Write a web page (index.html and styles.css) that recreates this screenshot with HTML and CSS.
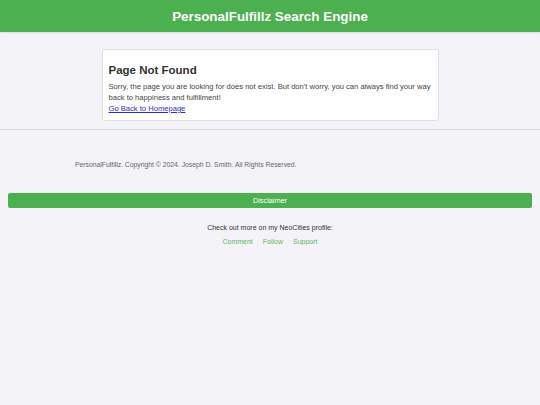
FILE: index.html
```
<!DOCTYPE html>
<html>
<head>
<meta charset="utf-8">
<link rel="stylesheet" href="styles.css">
</head>
<body>
<header class="top">PersonalFulfillz Search Engine</header>
<main class="main">
  <section class="card">
    <h2 class="title">Page Not Found</h2>
    <p class="msg">Sorry, the page you are looking for does not exist. But don't worry, you can always find your way back to happiness and fulfillment!</p>
    <a class="home" href="#">Go Back to Homepage</a>
  </section>
</main>
<hr class="rule">
<footer class="foot">
  <p class="copy">PersonalFulfillz. Copyright © 2024. Joseph D. Smith. All Rights Reserved.</p>
  <div class="disclaimer">Disclaimer</div>
  <p class="check">Check out more on my NeoCities profile:</p>
  <nav class="links"><a href="#">Comment</a><a href="#">Follow</a><a href="#">Support</a></nav>
</footer>
</body>
</html>
```
FILE: styles.css
```
html, body { margin: 0; padding: 0; }
body {
  background: #f4f4f8;
  font-family: "Liberation Sans", Arial, sans-serif;
  color: #333;
}
.top {
  background: #4caf50;
  color: #fff;
  font-weight: bold;
  font-size: 13.4px;
  height: 32px;
  display: flex;
  align-items: center;
  justify-content: center;
  box-shadow: 0 1px 2px rgba(0,0,0,0.1);
}
.main {
  padding-top: 17px;
  display: flex;
  justify-content: center;
}
.card {
  width: 323px;
  background: #fff;
  border: 1px solid #e0e0e4;
  border-radius: 3px;
  padding: 9px 6px 6px 6px;
}
.title {
  margin: 0;
  font-size: 11.5px;
  font-weight: bold;
  color: #333;
  line-height: 14px;
  padding-top: 4px;
}
.msg {
  margin: 4px 0 0;
  font-size: 7.6px;
  line-height: 11px;
  color: #444;
}
.home {
  display: block;
  font-size: 7.6px;
  line-height: 11px;
  color: #2a2ad0;
}
.rule {
  margin: 8px 0 0;
  border: 0;
  border-top: 1px solid #dcdce0;
}
.foot { padding: 0 8px; }
.copy {
  margin: 30px 0 0 67px;
  font-size: 6.8px;
  color: #666;
  line-height: 10px;
}
.disclaimer {
  margin-top: 23px;
  background: #4caf50;
  color: #fff;
  font-size: 7.3px;
  height: 15px;
  border-radius: 2px;
  display: flex;
  align-items: center;
  justify-content: center;
}
.check {
  margin: 15px 0 0;
  text-align: center;
  font-size: 7px;
  color: #333;
  line-height: 10px;
}
.links {
  margin-top: 5px;
  display: flex;
  justify-content: center;
  gap: 10px;
  font-size: 7px;
}
.links a { color: #5cb85c; text-decoration: none; }
```
